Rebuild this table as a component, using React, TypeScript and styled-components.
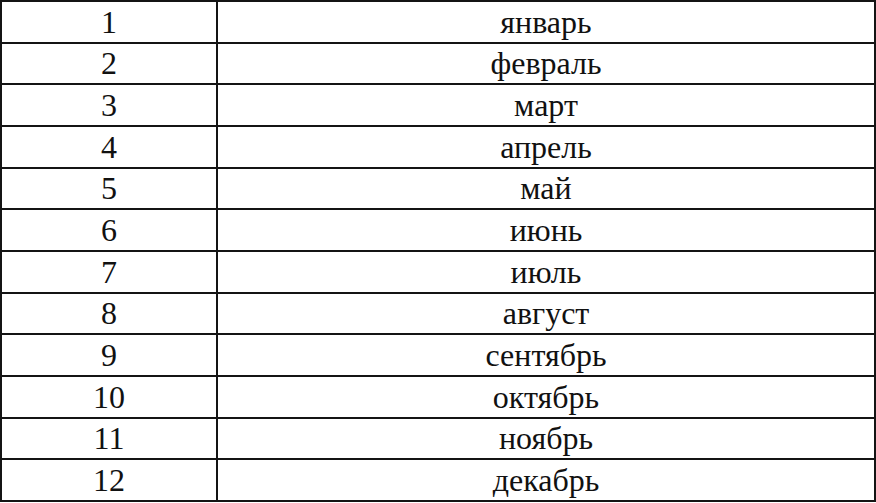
import React from "react";
import styled, { createGlobalStyle } from "styled-components";

const Global = createGlobalStyle`
  html, body { margin: 0; padding: 0; background: #fff; }
  body { font-family: "Liberation Serif", "Times New Roman", serif; color: #111; }
`;

const Table = styled.table`
  width: 876px;
  height: 502px;
  border-collapse: collapse;
  table-layout: fixed;
  border: 2px solid #141414;
`;

const Row = styled.tr``;

const Cell = styled.td<{ $w?: number }>`
  width: ${(p) => (p.$w ? `${p.$w}px` : "auto")};
  border: 2px solid #141414;
  padding: 0;
  text-align: center;
  vertical-align: middle;
  font-size: 32px;
  line-height: 1;
  color: #111;
`;

const months = [
  "январь",
  "февраль",
  "март",
  "апрель",
  "май",
  "июнь",
  "июль",
  "август",
  "сентябрь",
  "октябрь",
  "ноябрь",
  "декабрь",
];

export default function App() {
  return (
    <>
      <Global />
      <Table>
        <tbody>
          {months.map((m, i) => (
            <Row key={m}>
              <Cell $w={214}>{i + 1}</Cell>
              <Cell>{m}</Cell>
            </Row>
          ))}
        </tbody>
      </Table>
    </>
  );
}
